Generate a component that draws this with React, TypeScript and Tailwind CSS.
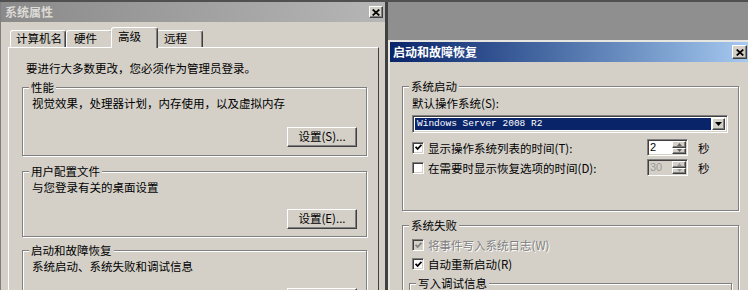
import React from 'react'

const raised =
  'bg-[#d4d0c8] border border-t-white border-l-white border-r-[#404040] border-b-[#404040] shadow-[inset_-1px_-1px_0_#808080]'
const sunken =
  'border border-t-[#808080] border-l-[#808080] border-r-white border-b-white shadow-[inset_1px_1px_0_#404040,inset_-1px_-1px_0_#d4d0c8]'
const disabledText = 'text-[#808080] [text-shadow:1px_1px_0_#fff]'

function CloseBox({ className }: { className: string }) {
  return (
    <div className={`${raised} flex items-center justify-center shrink-0 ${className}`}>
      <svg width="8" height="7" viewBox="0 0 8 7">
        <path d="M0.7 0.5 L7.3 6.5 M7.3 0.5 L0.7 6.5" stroke="#000" strokeWidth="1.7" />
      </svg>
    </div>
  )
}

// etched group box; padding goes on the inner div so the legend stays put
function Group({
  label,
  className = '',
  inner = '',
  children,
}: {
  label: string
  className?: string
  inner?: string
  children?: React.ReactNode
}) {
  return (
    <fieldset
      className={`border border-[#808080] shadow-[inset_1px_1px_0_#fff,1px_1px_0_#fff] ${className}`}
    >
      <legend className="ml-[6px] px-[2px] leading-[14px] bg-[#d4d0c8]">{label}</legend>
      <div className={inner}>{children}</div>
    </fieldset>
  )
}

function Btn({ children }: { children?: React.ReactNode }) {
  return (
    <div className={`${raised} h-[20px] w-[70px] flex items-center justify-center`}>{children}</div>
  )
}

function Check({ checked, disabled }: { checked: boolean; disabled?: boolean }) {
  return (
    <div
      className={`${sunken} w-[12px] h-[12px] shrink-0 flex items-center justify-center ${
        disabled ? 'bg-[#d4d0c8]' : 'bg-white'
      }`}
    >
      {checked && (
        <svg width="7" height="7" viewBox="0 0 7 7">
          <path
            d="M0.6 2.8 L2.6 5 L6.4 0.8"
            fill="none"
            stroke={disabled ? '#808080' : '#000'}
            strokeWidth="1.8"
          />
        </svg>
      )}
    </div>
  )
}

function Spin({ value, disabled }: { value: string; disabled?: boolean }) {
  return (
    <div className={`${sunken} w-[41px] h-[17px] flex p-[1px] ${disabled ? 'bg-[#d4d0c8]' : 'bg-white'}`}>
      <div
        className={`flex-1 flex items-center pl-[1px] font-['Liberation_Sans',sans-serif] text-[11px] ${
          disabled ? 'text-[#9a9a9a]' : 'text-black'
        }`}
      >
        {value}
      </div>
      <div className="w-[14px] flex flex-col">
        {[0, 1].map((i) => (
          <div key={i} className={`${raised} flex-1 flex items-center justify-center`}>
            <svg width="5" height="3" viewBox="0 0 5 3">
              <path d={i === 0 ? 'M0 3 L2.5 0 L5 3 Z' : 'M0 0 L2.5 3 L5 0 Z'} fill={disabled ? '#9a9a9a' : '#606060'} />
            </svg>
          </div>
        ))}
      </div>
    </div>
  )
}

function Tab({ label, className }: { label: string; className: string }) {
  return (
    <div
      className={`border-t border-l border-r border-t-white border-l-white border-r-[#404040] rounded-t-[3px] shadow-[inset_-1px_0_0_#808080] flex items-center bg-[#d4d0c8] ${className}`}
    >
      {label}
    </div>
  )
}

function LeftWindow() {
  return (
    <div className="w-[388px] shrink-0 h-full bg-[#d4d0c8] border-l border-l-[#808080] border-r-[3px] border-r-[#404040] flex flex-col">
      <div className="h-[20px] shrink-0 flex items-center justify-between bg-linear-to-r from-[#8a8a8a] to-[#b6b6b6] pl-[4px] pr-[2px]">
        <span className="text-[12px] font-bold text-[#dcdad5]">系统属性</span>
        <CloseBox className="w-[14px] h-[12px]" />
      </div>
      <div className="flex items-end ml-[9px] mt-[5px] shrink-0">
        <Tab label="计算机名" className="w-[56px] h-[17px] pl-[5px]" />
        <Tab label="硬件" className="w-[47px] h-[17px] pl-[7px]" />
        <Tab label="高级" className="relative z-10 w-[47px] h-[21px] -mx-[2px] -mb-[1px] pl-[6px] pb-[2px]" />
        <Tab label="远程" className="w-[47px] h-[17px] pl-[7px]" />
      </div>
      <div className="ml-[7px] w-[371px] flex-1 border border-t-white border-l-white border-r-[#404040] border-b-[#404040] pt-[13px] pl-[13px]">
        <div className="ml-[4px] leading-[14px]">要进行大多数更改，您必须作为管理员登录。</div>
        <Group label="性能" className="w-[345px] mt-[5px]" inner="pl-[9px] pr-[9px] pb-[8px]">
          <div className="pt-[2px] leading-[14px]">视觉效果，处理器计划，内存使用，以及虚拟内存</div>
          <div className="flex justify-end mt-[17px]">
            <Btn>设置(S)...</Btn>
          </div>
        </Group>
        <Group label="用户配置文件" className="w-[345px] mt-[8px]" inner="pl-[9px] pr-[9px] pb-[7px]">
          <div className="pt-[2px] leading-[14px]">与您登录有关的桌面设置</div>
          <div className="flex justify-end mt-[15px]">
            <Btn>设置(E)...</Btn>
          </div>
        </Group>
        <Group label="启动和故障恢复" className="w-[345px] mt-[6px]" inner="pl-[9px] pr-[9px] pb-[7px]">
          <div className="pt-[2px] leading-[14px]">系统启动、系统失败和调试信息</div>
          <div className="flex justify-end mt-[15px]">
            <Btn />
          </div>
        </Group>
      </div>
    </div>
  )
}

function CheckRow({
  label,
  checked,
  disabled,
  className = '',
  children,
}: {
  label: string
  checked: boolean
  disabled?: boolean
  className?: string
  children?: React.ReactNode
}) {
  return (
    <div className={`flex items-center ${className}`}>
      <Check checked={checked} disabled={disabled} />
      <span className={`ml-[4px] leading-[14px] ${children ? 'w-[219px]' : ''} ${disabled ? disabledText : ''}`}>
        {label}
      </span>
      {children}
    </div>
  )
}

function RightDialog() {
  return (
    <div className="w-[362px] flex-1 bg-[#d4d0c8] border-t-2 border-l-2 border-t-[#e8e6e1] border-l-[#e8e6e1] flex flex-col">
      <div className="h-[20px] shrink-0 flex items-center justify-between bg-linear-to-r from-[#0a246a] to-[#a6caf0] pl-[3px] pr-[3px]">
        <span className="text-[12px] font-bold text-white">启动和故障恢复</span>
        <CloseBox className="w-[15px] h-[14px]" />
      </div>
      <div className="pl-[12px] pt-[17px]">
        <Group label="系统启动" className="w-[337px]" inner="pl-[9px] pb-[34px]">
          <div className="pt-[3px] leading-[14px]">默认操作系统(S):</div>
          <div className={`${sunken} mt-[5px] w-[316px] h-[18px] bg-white flex p-[2px]`}>
            <div className="flex-1 bg-[#0a246a] text-white flex items-center pl-[2px] font-['Liberation_Mono',monospace] text-[9.5px]">
              Windows Server 2008 R2
            </div>
            <div className={`${raised} w-[13px] ml-[1px] flex items-center justify-center`}>
              <svg width="7" height="4" viewBox="0 0 7 4">
                <path d="M0 0 L7 0 L3.5 4 Z" fill="#000" />
              </svg>
            </div>
          </div>
          <CheckRow label="显示操作系统列表的时间(T):" checked className="mt-[6px]">
            <Spin value="2" />
            <span className="ml-[10px] leading-[14px]">秒</span>
          </CheckRow>
          <CheckRow label="在需要时显示恢复选项的时间(D):" checked={false} className="mt-[3px]">
            <Spin value="30" disabled />
            <span className="ml-[10px] leading-[14px]">秒</span>
          </CheckRow>
        </Group>
        <Group label="系统失败" className="w-[337px] mt-[7px]" inner="pl-[9px] pb-[20px]">
          <CheckRow label="将事件写入系统日志(W)" checked disabled className="pt-[6px]" />
          <CheckRow label="自动重新启动(R)" checked className="mt-[5px]" />
          <Group label="写入调试信息" className="w-[323px] -ml-[3px] mt-[5px]" inner="h-[60px]" />
        </Group>
      </div>
    </div>
  )
}

export default function App() {
  return (
    <div className="w-[748px] h-[290px] overflow-hidden flex bg-[#8f8f8f] border-t-2 border-t-[#505050] text-black text-[11.5px] font-['Noto_Sans_CJK_SC',sans-serif]">
      <LeftWindow />
      <div className="flex-1 min-w-0 flex flex-col">
        <div className="h-[38px] shrink-0" />
        <RightDialog />
      </div>
    </div>
  )
}
